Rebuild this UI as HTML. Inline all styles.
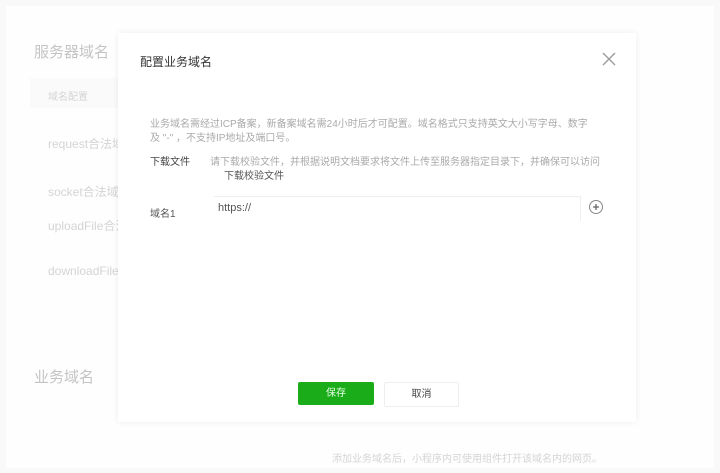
<!DOCTYPE html>
<html><head><meta charset="utf-8"><style>
body{margin:0;width:720px;height:473px;background:#f9f9f9;font-family:"Liberation Sans","Noto Sans CJK SC",sans-serif;position:relative;overflow:hidden}
.page{position:absolute;left:6px;top:6px;width:708px;height:462px;background:#fefefe}
.bg{position:absolute;color:#d4d4d4;font-size:12px;white-space:nowrap}
.modal{position:absolute;left:118px;top:33px;width:518px;height:389px;background:#fff;box-shadow:0 0 6px rgba(0,0,0,.07)}
.t{position:absolute;font-size:11px;color:#555;white-space:nowrap}
.g{color:#aaa;font-size:10px}
</style></head><body>
<div class="page"></div>
<div class="bg" style="left:34px;top:41px;font-size:15px;color:#c4c4c4">服务器域名</div>
<div style="position:absolute;left:30px;top:78px;width:90px;height:30px;background:#fafafa"></div>
<div class="bg" style="left:48px;top:88px;font-size:10px">域名配置</div>
<div class="bg" style="left:48px;top:135px">request合法域</div>
<div class="bg" style="left:48px;top:183px">socket合法域</div>
<div class="bg" style="left:48px;top:217px">uploadFile合法</div>
<div class="bg" style="left:48px;top:264px">downloadFile</div>
<div class="bg" style="left:34px;top:366px;font-size:15px;color:#c4c4c4">业务域名</div>
<div class="bg" style="left:332px;top:450px;font-size:10px">添加业务域名后，小程序内可使用组件打开该域名内的网页。</div>
<div class="modal">
<div class="t" style="left:22px;top:20px;font-size:12px;color:#333">配置业务域名</div>
<svg style="position:absolute;left:484px;top:19px" width="14" height="14"><path d="M1 1L13 13M13 1L1 13" stroke="#999" stroke-width="1.3"/></svg>
<div class="t g" style="left:32px;top:82px">业务域名需经过ICP备案，新备案域名需24小时后才可配置。域名格式只支持英文大小写字母、数字</div>
<div class="t g" style="left:32px;top:96px">及 "-" ，不支持IP地址及端口号。</div>
<div class="t" style="left:32px;top:120px;font-size:10px;color:#444">下载文件</div>
<div class="t g" style="left:92px;top:120px">请下载校验文件，并根据说明文档要求将文件上传至服务器指定目录下，并确保可以访问</div>
<div class="t" style="left:106px;top:134px;font-size:10px;color:#555">下载校验文件</div>
<div class="t" style="left:32px;top:172px;font-size:10px;color:#555">域名1</div>
<div style="position:absolute;left:96px;top:163px;width:366px;height:24px;border-top:1px solid #eee;border-right:1px solid #eee"></div>
<div class="t" style="left:100px;top:169px;font-size:11px;color:#555">https://</div>
<svg style="position:absolute;left:470px;top:166px" width="16" height="16"><circle cx="8" cy="8" r="6.5" fill="none" stroke="#888"/><path d="M8 5V11M5 8H11" stroke="#666" stroke-width="1.3"/></svg>
<div style="position:absolute;left:180px;top:349px;width:76px;height:23px;background:#1aad19;border-radius:2px;color:#e8ffe8;font-size:10px;text-align:center;line-height:23px">保存</div>
<div style="position:absolute;left:266px;top:349px;width:73px;height:23px;background:#fff;border:1px solid #eee;border-radius:2px;color:#444;font-size:10px;text-align:center;line-height:23px">取消</div>
</div>
</body></html>
